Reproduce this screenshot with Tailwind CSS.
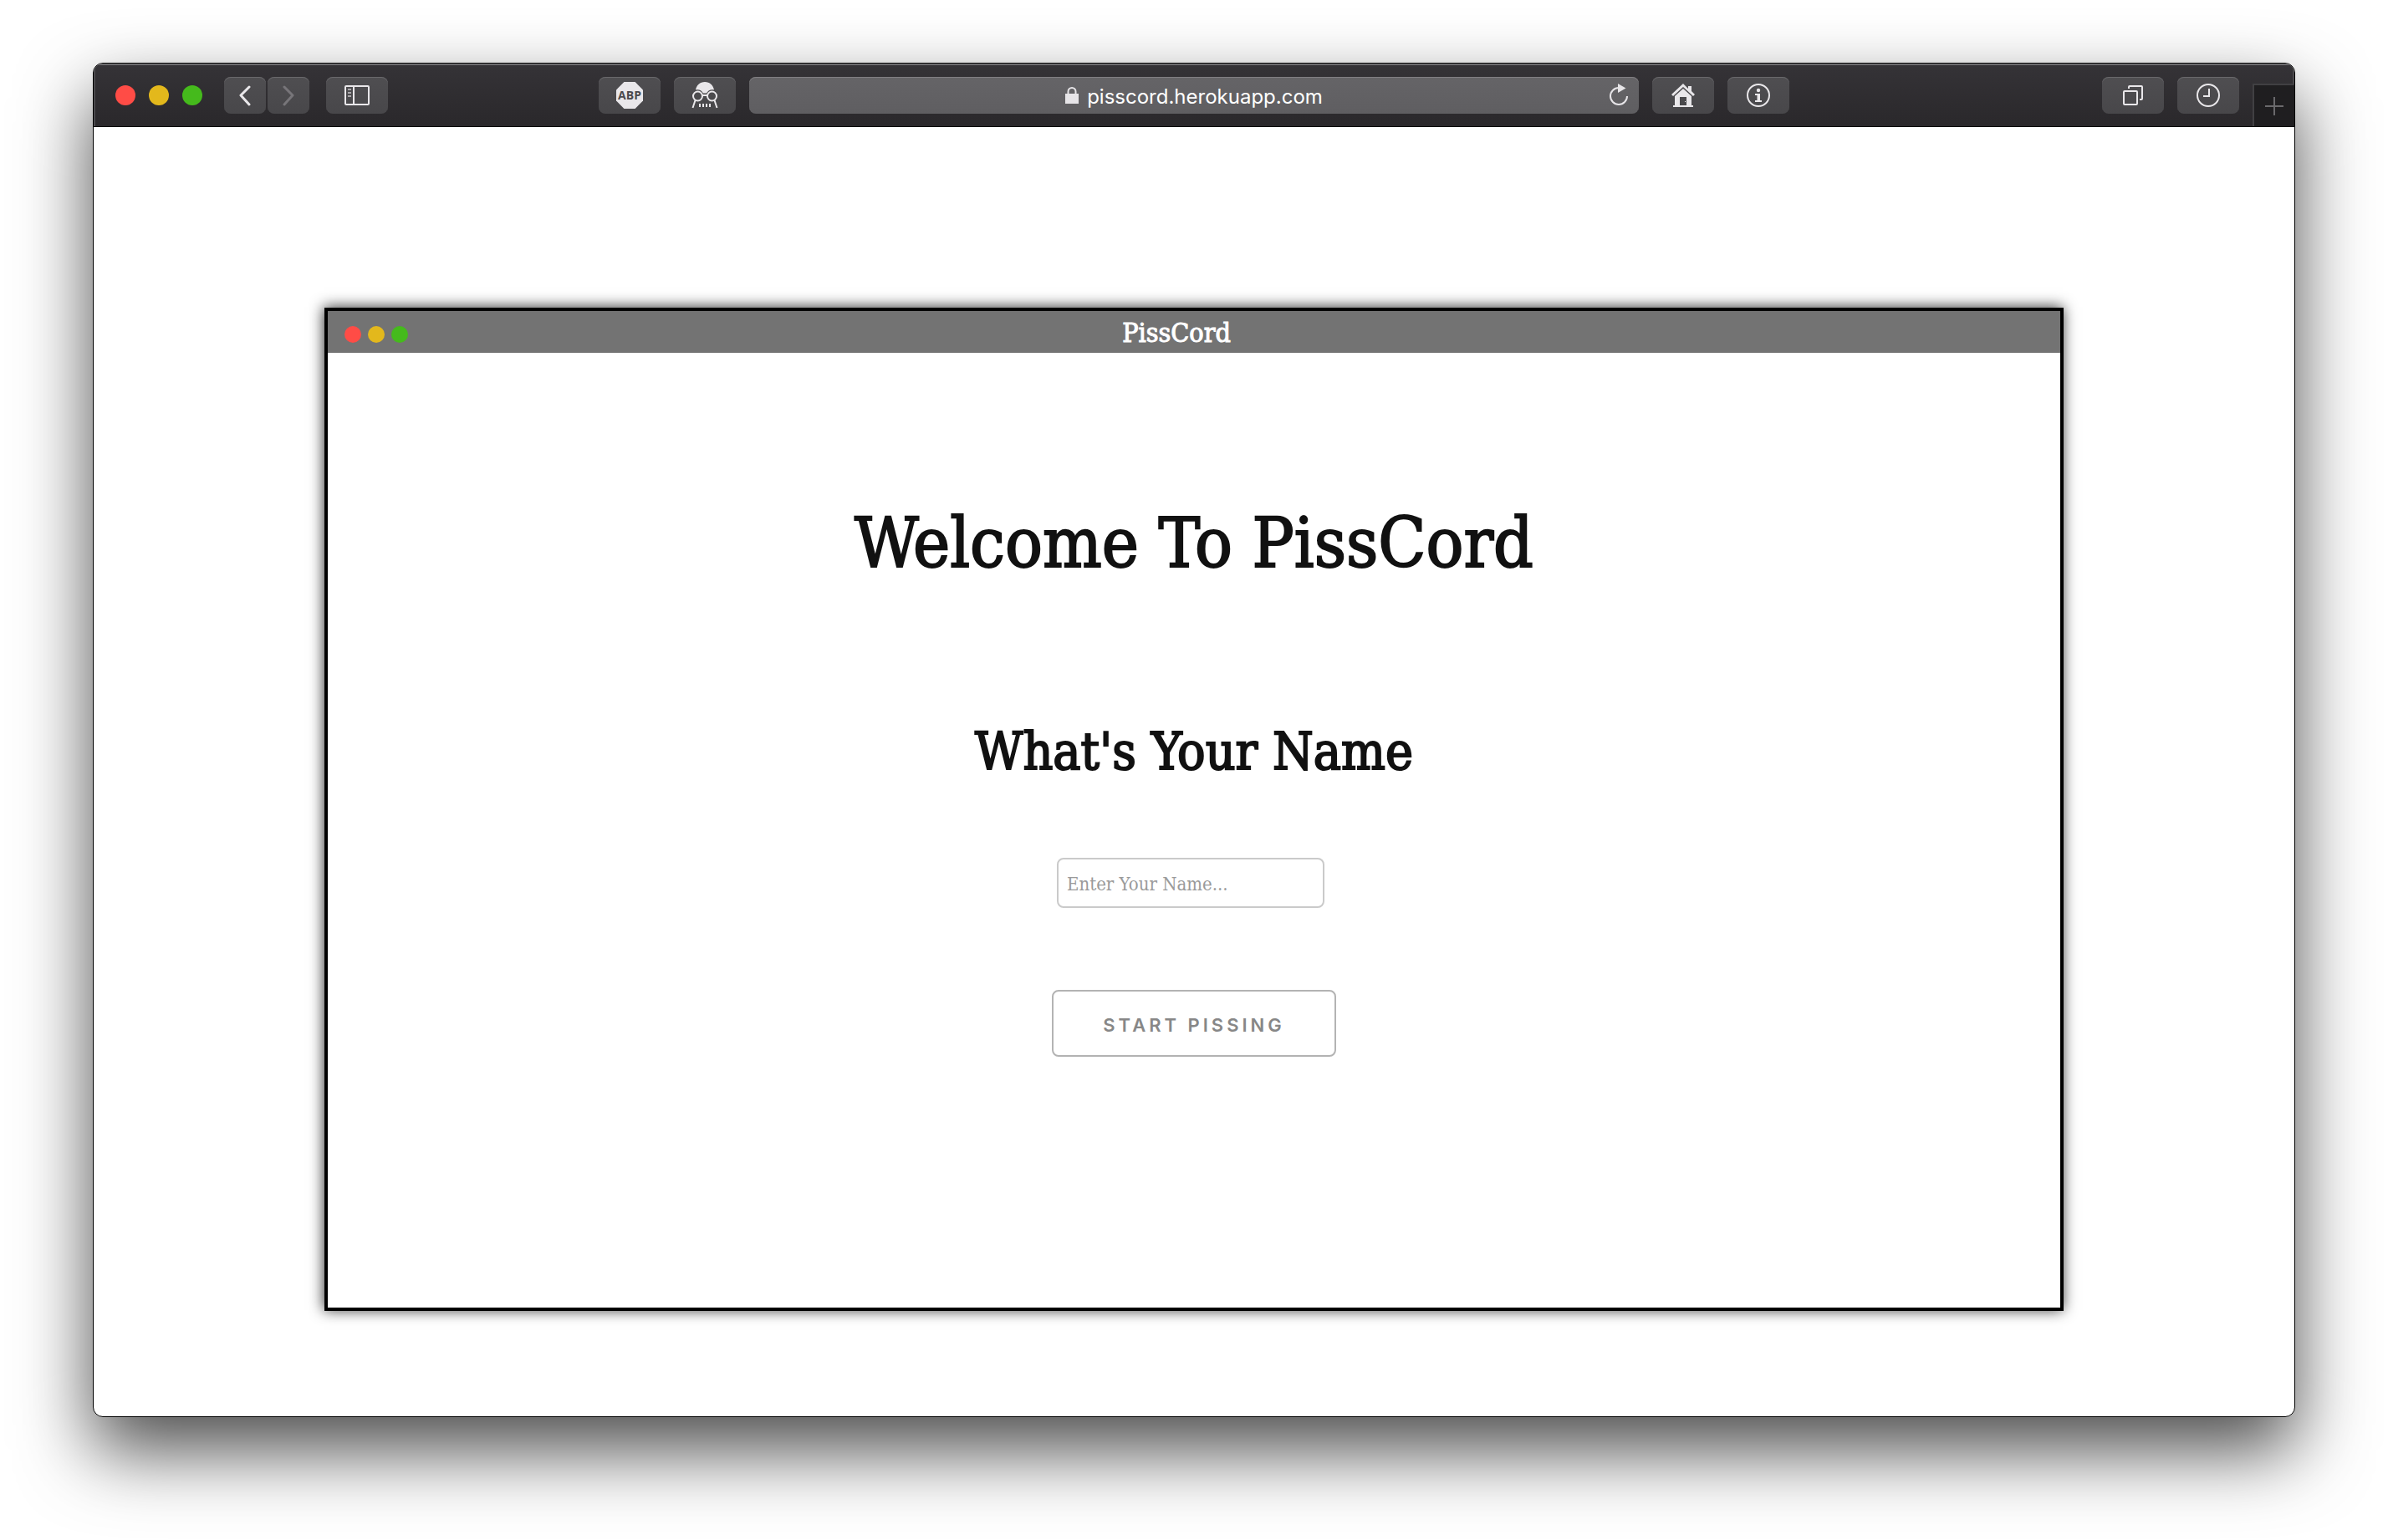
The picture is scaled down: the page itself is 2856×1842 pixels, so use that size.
<!DOCTYPE html>
<html lang="en">
<head>
<meta charset="utf-8">
<title>PissCord</title>
<script src="https://cdn.jsdelivr.net/npm/@tailwindcss/browser@4"></script>
</head>
<body class="bg-white font-['Inter',sans-serif] px-[111px] pt-[75px] pb-[147px]">
<div class="flex flex-col min-h-[calc(100vh-222px)] rounded-[12px] border border-black bg-white overflow-hidden shadow-[0_40px_88px_rgba(0,0,0,0.7)]">

  <header class="flex items-center h-[76px] shrink-0 border-b border-black bg-linear-to-b from-[#353337] to-[#2a282b] shadow-[inset_0_2px_0_#6d6c6f,inset_2px_0_0_#4a494c,inset_-2px_0_0_#4a494c]">
    <div class="flex flex-1 items-center">
      <div class="flex gap-4 ml-[26px]">
        <span class="size-6 rounded-full bg-[#ff4c46]"></span>
        <span class="size-6 rounded-full bg-[#e3b81c]"></span>
        <span class="size-6 rounded-full bg-[#45ba1c]"></span>
      </div>
      <nav class="flex gap-[2px] ml-[26px]">
        <button aria-label="Back" class="flex items-center justify-center w-[50px] h-11 rounded-lg bg-linear-to-b from-[#4f4e51] to-[#48474a] shadow-[inset_0_1px_0_#69686b]">
          <svg width="16" height="26" viewBox="0 0 16 26" fill="none" stroke="#e9e7ea" stroke-width="3" stroke-linecap="round" stroke-linejoin="round"><path d="M13 3 3 13l10 11"/></svg>
        </button>
        <button aria-label="Forward" class="flex items-center justify-center w-[50px] h-11 rounded-lg bg-linear-to-b from-[#4f4e51] to-[#48474a] shadow-[inset_0_1px_0_#69686b]">
          <svg width="16" height="26" viewBox="0 0 16 26" fill="none" stroke="#777579" stroke-width="3" stroke-linecap="round" stroke-linejoin="round"><path d="m3 3 10 10L3 24"/></svg>
        </button>
      </nav>
      <button aria-label="Sidebar" class="flex items-center justify-center w-[74px] h-11 ml-5 rounded-lg bg-linear-to-b from-[#4f4e51] to-[#48474a] shadow-[inset_0_1px_0_#69686b]">
        <svg width="30" height="24" viewBox="0 0 30 24" fill="none" stroke="#e9e7ea" stroke-width="2"><rect x="1" y="1" width="28" height="22" rx="1"/><path d="M11 1v22"/><path stroke="#aaa8ab" d="M4 5h4M4 9h4M4 13h4"/></svg>
      </button>
    </div>

    <div class="flex items-center gap-4 w-[54.1%]">
      <button aria-label="Adblock Plus" class="flex items-center justify-center w-[74px] h-11 rounded-lg bg-linear-to-b from-[#4f4e51] to-[#48474a] shadow-[inset_0_1px_0_#69686b]">
        <svg width="32" height="32" viewBox="0 0 32 32"><path fill="#e9e7ea" d="M9.400 0h13.200L32 9.400v13.200L22.600 32H9.400L0 22.600V9.400z"/><text x="16" y="21" text-anchor="middle" font-family="Open Sans, sans-serif" font-weight="700" font-size="14" fill="#4b4a4d">ABP</text></svg>
      </button>
      <button aria-label="Privacy" class="flex items-center justify-center w-[74px] h-11 rounded-lg bg-linear-to-b from-[#4f4e51] to-[#48474a] shadow-[inset_0_1px_0_#69686b]">
        <svg width="32" height="32" viewBox="0 0 32 32" fill="none" stroke="#e9e7ea" stroke-width="2"><path fill="#e9e7ea" stroke="none" d="M5 9.500C6 4 10 0 16 0s10 4 11 9.500c-4-1-7 .5-9 4h-4c-2-3.500-5-5-9-4z"/><circle cx="7.500" cy="17" r="5.500"/><circle cx="24.500" cy="17" r="5.500"/><path d="M13 16h6M4.500 22 1.500 31M27.500 22l3 9"/><path d="M10 26v4M14 26v4M18 26v4M22 26v4"/></svg>
      </button>
      <div class="relative flex flex-1 items-center justify-center gap-[10px] h-11 rounded-lg bg-linear-to-b from-[#656467] to-[#5f5e61] shadow-[inset_0_1px_0_#817f83]">
        <svg width="16" height="20" viewBox="0 0 16 20"><path d="M3.500 9V5.500a4.500 4.500 0 0 1 9 0V9" fill="none" stroke="#e6e4e7" stroke-width="2"/><rect y="8" width="16" height="12" fill="#e6e4e7"/></svg>
        <span class="pt-1 text-[24px] leading-8 text-white">pisscord.herokuapp.com</span>
        <button aria-label="Reload" class="absolute right-3 top-[7px]">
          <svg width="24" height="28" viewBox="0 0 24 28"><path d="M12 6a10 10 0 1 0 10 10" fill="none" stroke="#e6e4e7" stroke-width="2"/><path d="m11 1 9.500 5.500L11 12z" fill="#e6e4e7"/></svg>
        </button>
      </div>
      <button aria-label="Home" class="flex items-center justify-center w-[74px] h-11 rounded-lg bg-linear-to-b from-[#4f4e51] to-[#48474a] shadow-[inset_0_1px_0_#69686b]">
        <svg width="28" height="28" viewBox="0 0 28 28" fill="#e9e7ea"><path d="M14 0 0 13l2 2L14 4l12 11 2-2-4-4V3h-4v3z"/><path fill-rule="evenodd" d="M14 6 4 15v11H2v2h24v-2h-2V15zM10 16h8v10h-8z"/><path d="M16 21h1v1h-1z"/></svg>
      </button>
      <button aria-label="Site info" class="flex items-center justify-center w-[74px] h-11 rounded-lg bg-linear-to-b from-[#4f4e51] to-[#48474a] shadow-[inset_0_1px_0_#69686b]">
        <svg width="28" height="28" viewBox="0 0 28 28"><circle cx="14" cy="14" r="13" fill="none" stroke="#e9e7ea" stroke-width="2"/><circle cx="14" cy="8" r="2.200" fill="#e9e7ea"/><path fill="#e9e7ea" d="M10 12h6v8h2v2h-8v-2h2.500v-6H10z"/></svg>
      </button>
    </div>

    <div class="flex flex-1 items-center justify-end self-stretch">
      <button aria-label="Tabs" class="flex items-center justify-center w-[74px] h-11 mr-4 rounded-lg bg-linear-to-b from-[#4f4e51] to-[#48474a] shadow-[inset_0_1px_0_#69686b]">
        <svg width="24" height="24" viewBox="0 0 24 24" fill="none" stroke="#e9e7ea" stroke-width="2"><rect x="1" y="7" width="16" height="16" rx="1"/><path d="M7 4V2q0-1 1-1h14q1 0 1 1v14q0 1-1 1h-2"/></svg>
      </button>
      <button aria-label="History" class="flex items-center justify-center w-[74px] h-11 mr-4 rounded-lg bg-linear-to-b from-[#4f4e51] to-[#48474a] shadow-[inset_0_1px_0_#69686b]">
        <svg width="28" height="28" viewBox="0 0 28 28" fill="none" stroke="#e9e7ea" stroke-width="2"><circle cx="14" cy="14" r="13"/><path d="M15 6v9H8"/></svg>
      </button>
      <button aria-label="New tab" class="flex items-center justify-center self-end w-[50px] h-[51px] border-l-2 border-t-2 border-[#414043] bg-[#1f1e20]">
        <svg width="22" height="22" viewBox="0 0 22 22" stroke="#6a696c" stroke-width="2"><path d="M11 0v22M0 11h22"/></svg>
      </button>
    </div>
  </header>

  <main class="flex flex-1 flex-col items-center pt-[216px] pb-[126px]">
    <section class="flex flex-1 flex-col w-[79%] border-4 border-black bg-white font-['DejaVu_Serif_Condensed','DejaVu_Serif',serif] shadow-[-1px_-1px_16px_rgba(0,0,0,0.8)]">
      <div class="flex items-center h-[50px] px-5 bg-[#737373]">
        <div class="flex gap-2 pt-[6px]">
          <span class="size-5 rounded-full bg-[#ff4c46]"></span>
          <span class="size-5 rounded-full bg-[#e3b81c]"></span>
          <span class="size-5 rounded-full bg-[#45ba1c]"></span>
        </div>
        <p class="flex-1 pr-[118px] pt-[2px] text-center text-[32px] leading-[48px] text-white [-webkit-text-stroke:1px]">PissCord</p>
      </div>
      <form class="flex flex-col items-center pt-[178px] text-[#111]">
        <h1 class="text-[83px] leading-[100px] [-webkit-text-stroke:2px]">Welcome To PissCord</h1>
        <label for="name" class="mt-[159px] text-[62px] leading-[80px] [-webkit-text-stroke:2px]">What's Your Name</label>
        <input id="name" type="text" placeholder="Enter Your Name..." class="w-[320px] h-[60px] mt-[87px] mr-2 px-[10px] pt-[2px] rounded-lg border-2 border-[#cacaca] text-[22px] placeholder:text-[#9a9a9a]">
        <button type="button" class="w-[340px] h-20 mt-[98px] pt-1 rounded-lg border-2 border-[#b3b3b3] font-['Inter',sans-serif] text-[22px] font-semibold tracking-[4px] text-[#878787]">START PISSING</button>
      </form>
    </section>
  </main>
</div>
</body>
</html>
